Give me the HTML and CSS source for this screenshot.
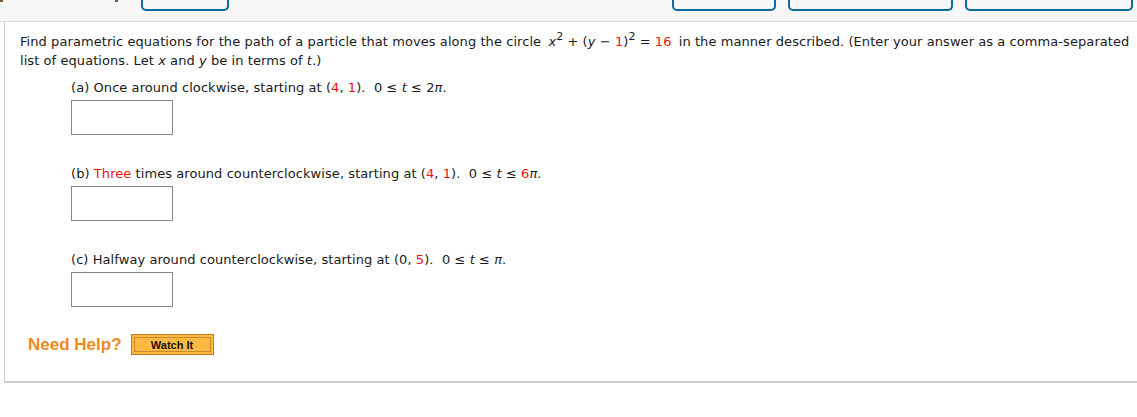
FILE: index.html
```html
<!DOCTYPE html>
<html>
<head>
  <title>Parametric Equations</title>
  <link rel="stylesheet" href="styles.css">
</head>
<body>
  <div class="topbar">
    <span class="mark mark-left"></span>
    <span class="mark mark-mid"></span>
    <span class="tab tab1"></span>
    <span class="spacer"></span>
    <span class="tab tab2"></span>
    <span class="tab tab3"></span>
    <span class="tab tab4"></span>
  </div>

  <div class="question">
    <p class="intro">
      Find parametric equations for the path of a particle that moves along the circle
      <span class="math"><i>x</i><sup>2</sup> + (<i>y</i> &minus; <span class="red">1</span>)<sup>2</sup> = <span class="red">16</span></span>
      in the manner described. (Enter your answer as a comma-separated list of equations. Let <i>x</i> and <i>y</i> be in terms of <i>t</i>.)
    </p>

    <div class="part">
      <p>(a) Once around clockwise, starting at (<span class="red">4</span>, <span class="red">1</span>).&nbsp; 0 &le; <i>t</i> &le; 2<i>&pi;</i>.</p>
      <input type="text" class="answer">
    </div>

    <div class="part">
      <p>(b) <span class="red">Three</span> times around counterclockwise, starting at (<span class="red">4</span>, <span class="red">1</span>).&nbsp; 0 &le; <i>t</i> &le; <span class="red">6</span><i>&pi;</i>.</p>
      <input type="text" class="answer">
    </div>

    <div class="part last">
      <p>(c) Halfway around counterclockwise, starting at (0, <span class="red">5</span>).&nbsp; 0 &le; <i>t</i> &le; <i>&pi;</i>.</p>
      <input type="text" class="answer">
    </div>

    <div class="help">
      <span class="help-label">Need Help?</span>
      <button type="button" class="watch">Watch It</button>
    </div>
  </div>
</body>
</html>
```

FILE: styles.css
```css
body {
  margin: 0;
  font-family: "DejaVu Sans", Verdana, sans-serif;
  font-size: 13px;
  letter-spacing: 0.07px;
  color: #1a1a1a;
  background: #fff;
}

.topbar {
  display: flex;
  height: 21px;
  background-color: #f6f6f6;
  border-bottom: 1px solid #dcdcdc;
  position: relative;
}

.mark {
  position: absolute;
  top: 0;
  width: 3px;
  height: 2px;
  background: #7a5a3a;
}

.mark-left {
  left: 0;
}

.mark-mid {
  left: 115px;
}

.tab {
  height: 9px;
  border: 2px solid #0a6aa1;
  border-top: none;
  border-radius: 0 0 5px 5px;
  background: #f6f6f6;
}

.tab1 {
  margin-left: 141px;
  width: 84px;
}

.spacer {
  flex: 1;
}

.tab2 {
  width: 100px;
}

.tab3 {
  margin-left: 12px;
  width: 161px;
}

.tab4 {
  margin-left: 12px;
  margin-right: 4px;
  width: 164px;
}

.question {
  margin-left: 4px;
  border-left: 1px solid #cccccc;
  border-bottom: 2px solid #cfcfcf;
  padding: 10px 0 26px 15px;
}

.intro {
  margin: 0;
  line-height: 19px;
}

.math {
  margin: 0 3px;
}

sup {
  font-size: 11px;
  line-height: 0;
  vertical-align: 6px;
}

.red {
  color: #ee1111;
}

.part {
  margin-left: 51px;
}

.part p {
  margin: 8px 0 3px;
  line-height: 19px;
}

.answer {
  display: block;
  box-sizing: border-box;
  width: 102px;
  height: 35px;
  border: 1px solid #888;
  margin: 0 0 29px;
  padding: 0;
}

.part.last .answer {
  margin-bottom: 27px;
}

.help {
  display: flex;
  align-items: center;
  gap: 9px;
  margin-left: 8px;
}

.help-label {
  font-family: "Liberation Sans", Arial, sans-serif;
  font-weight: bold;
  font-size: 17px;
  letter-spacing: 0;
  color: #f0891c;
}

.watch {
  font-family: "Liberation Sans", Arial, sans-serif;
  font-weight: bold;
  font-size: 11px;
  letter-spacing: 0;
  color: #111;
  width: 83px;
  height: 21px;
  padding: 0;
  background: #fdb940;
  border: 1px solid #c9781e;
  box-shadow: inset 0 0 0 2px #fdb940, inset 0 0 0 3px #c9882e;
  cursor: pointer;
}
```
